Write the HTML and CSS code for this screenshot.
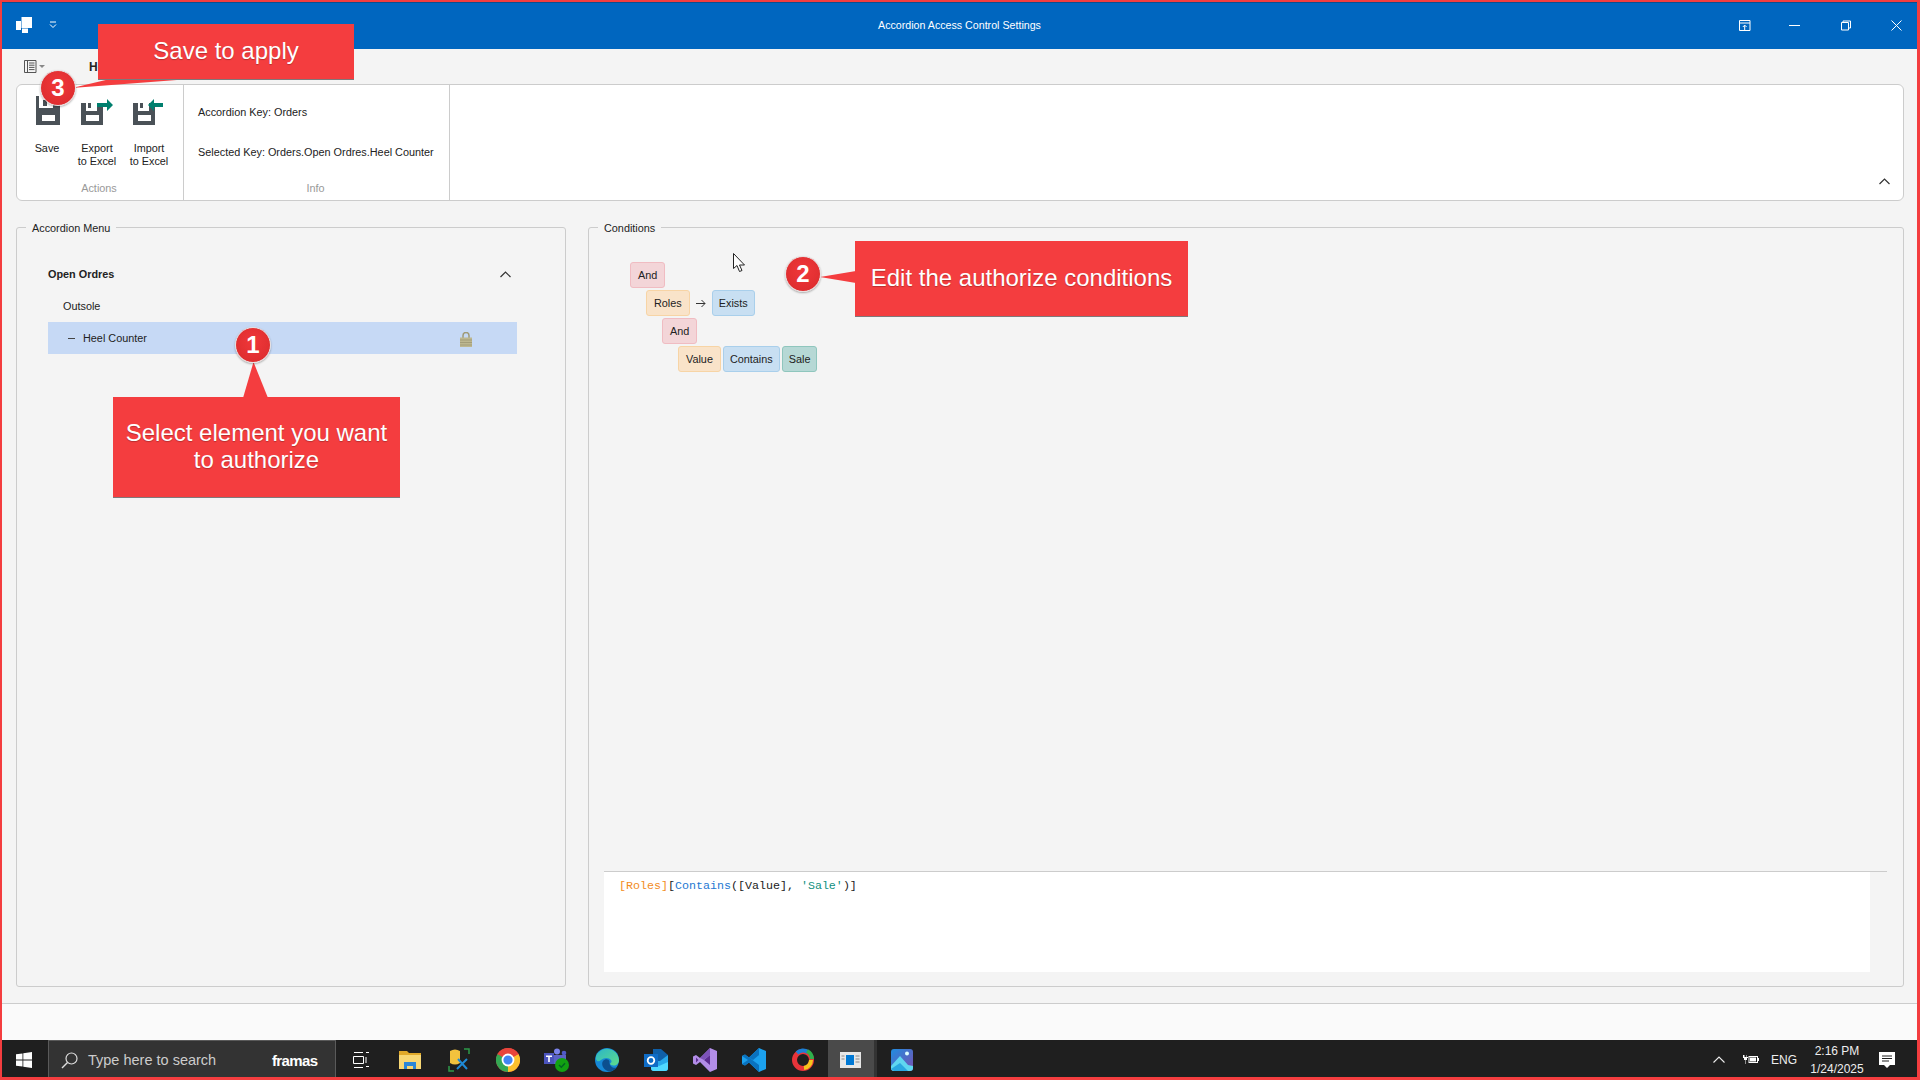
FILE: index.html
```html
<!DOCTYPE html>
<html lang="en">
<head>
  <meta charset="UTF-8">
  <title>Accordion Access Control Settings</title>
  <link rel="stylesheet" href="styles.css">
</head>
<body>
  <div class="window">

    <header class="titlebar">
      <div class="title-left">
        <svg class="app-logo" width="16" height="16" viewBox="0 0 16 16"><path fill="#fff" d="M0 4h5v9H0zM5.500 0H16v11H5.500zM6 11.500h6V16H6z"/></svg>
        <svg class="qat-arrow" width="8" height="8" viewBox="0 0 8 8"><path fill="none" stroke="#fff" d="M1 1h6M1 3.500l3 3 3-3"/></svg>
      </div>
      <div class="title-text">Accordion Access Control Settings</div>
      <div class="title-controls">
        <span class="win-btn win-pin"><svg width="12" height="11" viewBox="0 0 12 11"><path fill="none" stroke="#fff" d="M.5.500h10.500v10H.5zM.5 3h10.500M5.700 10V5.500M3.800 7l1.900-1.900L7.600 7"/></svg></span>
        <span class="win-btn"><svg width="11" height="1" viewBox="0 0 11 1"><path fill="#fff" d="M0 0h11v1H0z"/></svg></span>
        <span class="win-btn"><svg width="11" height="11" viewBox="0 0 11 11"><path fill="none" stroke="#fff" d="M1.500 2.500h7v7.500h-7zM3 2.500V1h7.500v7H8.500"/></svg></span>
        <span class="win-btn"><svg width="11" height="11" viewBox="0 0 11 11"><path fill="none" stroke="#fff" d="M.5.500l10 10M10.500.500l-10 10"/></svg></span>
      </div>
    </header>

    <nav class="menubar">
      <svg class="view-icon" width="13" height="13" viewBox="0 0 13 13"><path fill="none" stroke="#555" d="M.5.500h11.500v12H.5zM3.500.500v12M5 3h5.500M5 5.200h5.500M5 7.400h5.500M5 9.600h5.500"/></svg>
      <svg class="view-caret" width="6" height="4" viewBox="0 0 6 4"><path fill="#888" d="M0 0h6L3 3z"/></svg>
      <span class="tab-home">Home</span>
    </nav>

    <section class="ribbon">
      <div class="group group-actions">
        <div class="group-body buttons">
          <div class="rb-btn rb-save">
            <svg width="24" height="29" viewBox="0 0 24 29"><path fill="#4a5157" fill-rule="evenodd" d="M0 0h24v29H0zM3 0v12h14V0zM7 4h4v6H7zM6 19v6h13v-6z"/></svg>
            <span>Save</span>
          </div>
          <div class="rb-btn rb-export">
            <svg width="32" height="29" viewBox="0 0 32 29"><path fill="#4a5157" fill-rule="evenodd" d="M0 7h5v8h11V7h6v22H0zM7 7h3v5H7zM5 19v6h13v-6z"/><path fill="#007f6e" d="M16 7h10V3l6 6-6 6v-4H16z"/></svg>
            <span>Export<br>to Excel</span>
          </div>
          <div class="rb-btn rb-import">
            <svg width="32" height="29" viewBox="0 0 32 29"><path fill="#4a5157" fill-rule="evenodd" d="M0 7h5v8h11V7h6v22H0zM7 7h3v5H7zM5 19v6h13v-6z"/><path fill="#007f6e" d="M30 7H21V3l-6 6 6 6v-4h9z"/></svg>
            <span>Import<br>to Excel</span>
          </div>
        </div>
        <div class="group-caption">Actions</div>
      </div>
      <div class="group group-info">
        <div class="group-body info-lines">
          <div>Accordion Key: Orders</div>
          <div>Selected Key: Orders.Open Ordres.Heel Counter</div>
        </div>
        <div class="group-caption">Info</div>
      </div>
      <div class="ribbon-rest">
        <svg width="11" height="7" viewBox="0 0 11 7"><path fill="none" stroke="#333" stroke-width="1.200" d="M.5 6l5-5 5 5"/></svg>
      </div>
    </section>

    <main class="panels">
      <fieldset class="panel panel-menu">
        <legend>Accordion Menu</legend>
        <div class="acc">
          <div class="acc-head">
            <span>Open Ordres</span>
            <svg width="11" height="7" viewBox="0 0 11 7"><path fill="none" stroke="#333" stroke-width="1.200" d="M.5 6l5-5 5 5"/></svg>
          </div>
          <div class="acc-item">Outsole</div>
          <div class="acc-item acc-selected">
            <span class="acc-dash"></span>
            <span>Heel Counter</span>
            <svg class="lock" width="12" height="15" viewBox="0 0 12 15"><path fill="none" stroke="#9f9a78" stroke-width="1.500" d="M3 6V3.500a3 3 0 0 1 6 0V6"/><path fill="#bdb78f" d="M0 5.500h12V15H0z"/><path stroke="#a39d78" d="M0 8h12M0 10.500h12M0 13h12"/></svg>
          </div>
        </div>
      </fieldset>

      <fieldset class="panel panel-cond">
        <legend>Conditions</legend>
        <div class="chips">
          <div class="chip-row"><span class="chip chip-and">And</span></div>
          <div class="chip-row indent-1">
            <span class="chip chip-field">Roles</span>
            <svg class="chip-arrow" width="10" height="9" viewBox="0 0 10 9"><path fill="none" stroke="#333" d="M0 4.500h9M5.500 1L9 4.500 5.500 8"/></svg>
            <span class="chip chip-op">Exists</span>
          </div>
          <div class="chip-row indent-2"><span class="chip chip-and">And</span></div>
          <div class="chip-row indent-3">
            <span class="chip chip-field">Value</span>
            <span class="chip chip-op">Contains</span>
            <span class="chip chip-val">Sale</span>
          </div>
        </div>
        <div class="expr-wrap">
          <div class="expr"><span class="c-field">[Roles]</span><span class="c-dark">[</span><span class="c-op">Contains</span><span class="c-dark">([Value], </span><span class="c-val">'Sale'</span><span class="c-dark">)]</span></div>
        </div>
      </fieldset>
    </main>

    <div class="statusbar"></div>

    <footer class="taskbar">
      <div class="start">
        <svg width="16" height="16" viewBox="0 0 16 16"><path fill="#fff" d="M0 2.300l6.500-.9v6.200H0zM7.300 1.300L16 0v7.600H7.300zM0 8.400h6.500v6.200L0 13.700zM7.300 8.400H16V16l-8.700-1.200z"/></svg>
      </div>
      <div class="search">
        <svg width="17" height="17" viewBox="0 0 17 17"><circle cx="10.500" cy="6.500" r="5.500" fill="none" stroke="#ddd" stroke-width="1.200"/><path stroke="#ddd" stroke-width="1.400" d="M6.500 10.500L1 16"/></svg>
        <span class="search-text">Type here to search</span>
        <span class="search-logo">framas</span>
      </div>
      <div class="tb-icon">
        <svg width="16" height="16" viewBox="0 0 16 16"><path fill="none" stroke="#fff" d="M1 .500h9M1 15.500h9M.5 4.500h10v7H.5zM13 .5h3M13 5v6M13 14.500h3"/></svg>
      </div>
      <div class="tb-icon">
        <svg width="22" height="18" viewBox="0 0 22 18"><path fill="#e0a92a" d="M0 0h8l2 2h12v16H0z"/><path fill="#f7d774" d="M0 4h22v14H0z"/><path fill="#2a86d8" d="M5 11h12v7h-3v-3H8v3H5z"/></svg>
      </div>
      <div class="tb-icon">
        <svg width="22" height="24" viewBox="0 0 22 24"><path fill="none" stroke="#2e9b4a" stroke-width="1.500" d="M16 1h5v5M1 18v5h5"/><path fill="#f2c23e" d="M2 3q5-3 10 0v12q-5 3-10 0z"/><path stroke="#1f8ad6" stroke-width="2" d="M9 21l10-10M10 11l9 10"/></svg>
      </div>
      <div class="tb-icon">
        <svg width="24" height="24" viewBox="0 0 24 24"><circle cx="12" cy="12" r="12" fill="#e8453c"/><path fill="#fbc02d" d="M12 12l10.400-6A12 12 0 0 1 12 24z"/><path fill="#34a853" d="M12 12l0 12A12 12 0 0 1 1.600 6z"/><path fill="#e8453c" d="M12 12L1.600 6A12 12 0 0 1 22.400 6z"/><circle cx="12" cy="12" r="5.500" fill="#4285f4" stroke="#fff" stroke-width="1.800"/></svg>
      </div>
      <div class="tb-icon">
        <svg width="26" height="24" viewBox="0 0 26 24"><circle cx="13" cy="3.500" r="3" fill="#7b83eb"/><circle cx="20" cy="5" r="2.300" fill="#5059c9"/><path fill="#5b62c4" d="M9 7h13v9H9z"/><path fill="#4b53bc" d="M0 5h10v11H0z"/><path fill="#fff" d="M2 7.500h6V9H5.800v5H4.200V9H2z"/><circle cx="18" cy="17" r="7" fill="#12a112"/><path fill="none" stroke="#062" stroke-width="1.500" d="M15 17l2.300 2.200L21 15.300"/></svg>
      </div>
      <div class="tb-icon">
        <svg width="24" height="24" viewBox="0 0 24 24"><defs><linearGradient id="ed" x1="0" y1="0" x2="1" y2="1"><stop offset="0" stop-color="#2bb6c8"/><stop offset="1" stop-color="#5fdc8a"/></linearGradient></defs><circle cx="12" cy="12" r="12" fill="#1688d6"/><path fill="url(#ed)" d="M1 8A12 12 0 0 1 24 12c0 3.500-2.500 5.500-5.500 5.500-2 0-3.500-.7-3.500-2 1.500-.8 2-2 1-3.500-2-2.800-7-2.800-10 0-2 1.800-4 2-5-1z"/><path fill="#0c4f8f" d="M8 13c2-2.500 6-2.300 6.500.5-.5 4 3 7.500 7.300 6C18 24 13 24.500 9.500 21 7 18.500 6.500 15 8 13z"/></svg>
      </div>
      <div class="tb-icon">
        <svg width="24" height="22" viewBox="0 0 24 22"><path fill="#28a8ea" d="M7 8l17-2v13a3 3 0 0 1-3 3H10a3 3 0 0 1-3-3z"/><path fill="#50d9ff" d="M7 13l8 4 9-4v6a3 3 0 0 1-3 3H10a3 3 0 0 1-3-3z"/><path fill="#0f5fa8" d="M9 0h8l7 6-8 6H9z"/><path fill="#0f6cc6" d="M0 5h14v13H0z"/><circle cx="7" cy="11.500" r="3.300" fill="none" stroke="#fff" stroke-width="1.800"/></svg>
      </div>
      <div class="tb-icon">
        <svg width="24" height="24" viewBox="0 0 24 24"><path fill="#b38ee8" d="M17 0l7 3v18l-7 3-10-10-4 3-3-1.500v-7L3 7l4 3z"/><path fill="#5c2d91" d="M17 7v10l-6-5zM3 9.500v5l2.500-2.500z"/><path fill="#7d53b8" d="M7 10l10-10v7l-6 5z"/></svg>
      </div>
      <div class="tb-icon">
        <svg width="24" height="24" viewBox="0 0 24 24"><path fill="#1ba1ee" d="M17 0l7 3v18l-7 3-10-9.500L3 17.500 0 16V8l3-1.500 4 3z"/><path fill="#0a72bf" d="M17 0v24L7 14.500 3 17.500 0 16l6-4-6-4 3-1.500 14 10.500V7l-6 5-4-2.500z"/></svg>
      </div>
      <div class="tb-icon">
        <svg width="22" height="24" viewBox="0 0 22 24"><circle cx="11" cy="12" r="8.500" fill="none" stroke="#e8343a" stroke-width="5"/><path fill="none" stroke="#1d7fd6" stroke-width="4" d="M5 5a9 9 0 0 1 11-1"/><path fill="none" stroke="#2eb04c" stroke-width="4" d="M15 3a9 9 0 0 1 5 8"/><path fill="none" stroke="#f6c51c" stroke-width="4" d="M19 12a8 8 0 0 1-7 8"/></svg>
      </div>
      <div class="tb-icon tb-active">
        <svg width="21" height="16" viewBox="0 0 21 16"><path fill="#e6e6e6" d="M0 0h21v16H0z"/><path fill="#0078d4" d="M6 3h8v10H6z"/><path stroke="#888" d="M1.500 4h3M1.500 7h3M15.500 4h4M15.500 7h4M15.500 10h4"/></svg>
      </div>
      <div class="tb-icon">
        <svg width="22" height="22" viewBox="0 0 22 22"><defs><linearGradient id="ph" x1="0" y1="0" x2="1" y2="1"><stop offset="0" stop-color="#1f8de0"/><stop offset="1" stop-color="#7a4fb0"/></linearGradient></defs><path fill="url(#ph)" d="M3 0h16a3 3 0 0 1 3 3v16a3 3 0 0 1-3 3H3a3 3 0 0 1-3-3V3a3 3 0 0 1 3-3z"/><circle cx="16" cy="4.500" r="2" fill="#dff"/><path fill="#5fd6f0" d="M0 17l9-10 8 9 5 1v2a3 3 0 0 1-3 3H3a3 3 0 0 1-3-3z"/><path fill="#2aa7e0" d="M0 20l9-6 8 8H3z"/></svg>
      </div>
      <div class="tray">
        <span class="tray-item tray-chevron"><svg width="12" height="7" viewBox="0 0 12 7"><path fill="none" stroke="#eee" stroke-width="1.100" d="M.5 6.500L6 1l5.500 5.500"/></svg></span>
        <span class="tray-item tray-battery"><svg width="16" height="9" viewBox="0 0 16 9"><path fill="#fff" d="M0 0h1.500v2H3V0h.5v2H5v1H4v2H2.500v4H2V5H1V3H0zM5.500 1H15v2h1v3h-1v2H5.500zM6.500 2v5h7.500V2z"/><path fill="#fff" d="M7 2.500h6v4H7z"/></svg></span>
        <span class="tray-item tray-lang">ENG</span>
        <span class="tray-item tray-clock"><span>2:16 PM</span><span>1/24/2025</span></span>
        <span class="tray-item tray-notify"><svg width="16" height="16" viewBox="0 0 16 16"><path fill="#fff" fill-rule="evenodd" d="M0 0h16v13h-5l-3 3-3-3H0zM3 3.500v1h10v-1zM3 6v1h10V6zM3 8.500v1h7v-1z"/></svg></span>
      </div>
    </footer>
  </div>

  <svg class="pointers" width="1920" height="1080" viewBox="0 0 1920 1080">
    <path class="pointer" d="M72 88L190 79H110z"/>
    <path class="pointer" d="M253.500 362L243 398h25z"/>
    <path class="pointer" d="M820 277L856 271v12z"/>
    <path class="mouse" d="M733.500 253.500v15l3.500-3 2.500 6 2.500-1-2.500-5.500h5z"/>
  </svg>

  <div class="callout callout-save">Save to apply</div>
  <div class="callout callout-select">Select element you want<br>to authorize</div>
  <div class="callout callout-edit">Edit the authorize conditions</div>
  <div class="badge badge-1">1</div>
  <div class="badge badge-2">2</div>
  <div class="badge badge-3">3</div>
</body>
</html>
```

FILE: styles.css
```css
* {
  box-sizing: border-box;
}

body {
  margin: 0;
  width: 1920px;
  height: 1080px;
  overflow: hidden;
  position: relative;
  font-family: "Liberation Sans", Arial, sans-serif;
  font-size: 10.85px;
  color: #222;
}

.window {
  width: 1920px;
  height: 1080px;
  border: solid #f43d3f;
  border-width: 2px 3px 3px 2px;
  background: #f4f4f4;
  display: flex;
  flex-direction: column;
}

/* title bar */
.titlebar {
  height: 47px;
  padding-bottom: 2px;
  background: #0066bf;
  border-top: 1px solid #0a4f8f;
  color: #fff;
  display: grid;
  grid-template-columns: 1fr auto 1fr;
  align-items: center;
}

.title-left {
  display: flex;
  align-items: center;
  padding-left: 14px;
}

.qat-arrow {
  margin-left: 17px;
}

.title-text {
  font-size: 10.67px;
}

.title-controls {
  display: flex;
  justify-content: flex-end;
  gap: 20.6px;
  padding-right: 6px;
}

.win-btn {
  width: 30px;
  height: 12px;
  display: flex;
  align-items: center;
  justify-content: center;
}

.win-pin {
  margin-left: 1px;
  margin-right: -1px;
}

/* menu row */
.menubar {
  height: 35px;
  display: flex;
  align-items: center;
  padding-left: 22px;
}

.view-caret {
  margin-left: 2px;
}

.tab-home {
  margin-left: 44px;
  font-size: 12px;
  font-weight: bold;
}

/* ribbon */
.ribbon {
  height: 117px;
  margin: 0 13px 0 14px;
  background: #fff;
  border: 1px solid #ccc;
  border-radius: 6px;
  display: flex;
  flex-shrink: 0;
}

.group {
  display: flex;
  flex-direction: column;
  border-right: 1px solid #ccc;
}

.group-actions {
  width: 167px;
}

.group-info {
  width: 266px;
}

.group-body {
  flex: 1;
}

.group-caption {
  height: 23px;
  padding: 5px 2px 0 0;
  text-align: center;
  color: #999;
}

.buttons {
  display: flex;
  padding-left: 5px;
}

.rb-btn {
  display: flex;
  flex-direction: column;
  align-items: center;
  padding-top: 11px;
  text-align: center;
  line-height: 13px;
}

.rb-btn span {
  margin-top: 17px;
}

.rb-save {
  width: 50px;
}

.rb-save svg {
  margin-left: 2px;
}

.rb-export {
  width: 50px;
}

.rb-import {
  width: 54px;
}

.info-lines {
  padding: 20px 0 0 14px;
  display: flex;
  flex-direction: column;
  gap: 26px;
  line-height: 14px;
}

.ribbon-rest {
  flex: 1;
  display: flex;
  align-items: flex-end;
  justify-content: flex-end;
  padding: 0 13px 15px 0;
}

/* panels */
.panels {
  height: 768px;
  margin: 18px 13px 0 14px;
  display: flex;
  gap: 22px;
  flex-shrink: 0;
}

.panel {
  margin: 0;
  min-width: 0;
  border: 1px solid #ccc;
  border-radius: 3px;
  padding: 0;
}

.panel legend {
  margin-left: 9px;
  padding: 2px 6px 0;
  line-height: 14px;
}

.panel-menu {
  width: 550px;
}

.panel-cond {
  flex: 1;
  display: flex;
  flex-direction: column;
}

.acc {
  padding: 23px 48px 0 31px;
}

.acc-head,
.acc-item {
  height: 32px;
  display: flex;
  align-items: center;
}

.acc-head {
  justify-content: space-between;
  font-weight: bold;
  padding-right: 6px;
}

.acc-item {
  padding-left: 15px;
}

.acc-selected {
  background: #c6d9f5;
  padding: 0 45px 0 20px;
}

.acc-dash {
  width: 7px;
  height: 1px;
  background: #444;
  margin-right: 8px;
}

.lock {
  margin-left: auto;
  margin-top: 2px;
}

.chips {
  display: flex;
  flex-direction: column;
  gap: 2px;
  padding: 27px 0 0 41px;
}

.chip-row {
  display: flex;
  align-items: center;
  gap: 2px;
}

.indent-1 {
  margin-left: 16px;
}

.indent-2 {
  margin-left: 32px;
}

.indent-3 {
  margin-left: 48px;
}

.chip {
  height: 26px;
  line-height: 24px;
  padding: 0 6px;
  border: 1px solid;
  border-radius: 3px;
}

.chip-and {
  background: #f3d5d8;
  border-color: #f0bcc2;
  padding: 0 7px;
}

.chip-field {
  background: #f9e3c9;
  border-color: #f7d4a5;
  padding: 0 7px;
}

.chip-op {
  background: #c8dff2;
  border-color: #a9cfeb;
}

.chip-val {
  background: #b6d8d5;
  border-color: #8fc6bd;
}

.chip-arrow {
  margin: 0 4px;
}

.expr-wrap {
  margin: auto 16px 14px 15px;
  height: 101px;
  border-top: 1px solid #ccc;
}

.expr {
  height: 100%;
  margin-right: 17px;
  background: #fff;
  padding: 7px 0 0 15px;
  font-family: "Liberation Mono", monospace;
  font-size: 11.67px;
  line-height: 14px;
  white-space: pre;
}

.c-field {
  color: #f28c1e;
}

.c-op {
  color: #1e78d2;
}

.c-val {
  color: #0f8f80;
}

.c-dark {
  color: #222;
}

/* status strip */
.statusbar {
  flex: 1;
  margin-top: 16px;
  background: #fafafa;
  border-top: 1px solid #ccc;
}

/* taskbar */
.taskbar {
  height: 37px;
  background: #1f1f1f;
  display: flex;
  flex-shrink: 0;
}

.start {
  width: 46px;
  padding: 2px 0 0 14px;
  display: flex;
  align-items: center;
}

.search {
  width: 287.500px;
  margin-right: 0.500px;
  background: #333;
  border: 1px solid #5a5a5a;
  border-bottom: 0;
  display: flex;
  align-items: center;
  padding: 2px 0 0 12px;
  color: #ccc;
  font-size: 14.5px;
}

.search-text {
  margin-left: 10px;
}

.search-logo {
  margin-left: auto;
  margin-right: 17px;
  color: #fff;
  font-size: 15px;
  font-weight: bold;
  letter-spacing: -0.6px;
}

.tb-icon {
  width: 49.200px;
  padding-top: 2px;
  display: flex;
  align-items: center;
  justify-content: center;
}

.tb-active {
  background: #4a4a4a;
  border-right: 3px solid #333;
}

.tray {
  margin-left: auto;
  display: flex;
  padding: 2px 16px 0 0;
  color: #eee;
}

.tray-item {
  display: flex;
  align-items: center;
  justify-content: center;
}

.tray-chevron,
.tray-battery {
  width: 32px;
}

.tray-lang {
  width: 34px;
  font-size: 12px;
}

.tray-clock {
  width: 72px;
  flex-direction: column;
  font-size: 12px;
  line-height: 18px;
}

.tray-notify {
  width: 28px;
}

/* annotations drawn over the app */
.pointers {
  position: absolute;
  top: 0;
  left: 0;
  pointer-events: none;
}

.pointer {
  fill: #f43d3f;
}

.mouse {
  fill: #fff;
  stroke: #222;
  stroke-width: 1;
}

.callout {
  position: absolute;
  display: flex;
  align-items: center;
  justify-content: center;
  padding-bottom: 2px;
  text-align: center;
  background: #f43d3f;
  box-shadow: 0 1px 0 #80787a;
  color: #fff;
  font-size: 24px;
  line-height: 27px;
  text-shadow: 0 1px 1px rgba(0, 0, 0, 0.25);
}

.callout-save {
  left: 98px;
  top: 24px;
  width: 256px;
  height: 55px;
}

.callout-select {
  left: 113px;
  top: 397px;
  width: 287px;
  height: 100px;
}

.callout-edit {
  left: 855px;
  top: 241px;
  width: 333px;
  height: 75px;
}

.badge {
  position: absolute;
  width: 36px;
  height: 36px;
  border-radius: 50%;
  background: radial-gradient(circle at 50% 40%, #f0383a, #d92a2c);
  border: 1px solid #e8e0e0;
  box-shadow: 0 1px 2px rgba(0, 0, 0, 0.3);
  color: #fff;
  font-size: 24px;
  font-weight: bold;
  line-height: 34px;
  text-align: center;
}

.badge-1 {
  left: 235px;
  top: 327px;
}

.badge-2 {
  left: 785px;
  top: 256px;
}

.badge-3 {
  left: 40px;
  top: 70px;
}
```
